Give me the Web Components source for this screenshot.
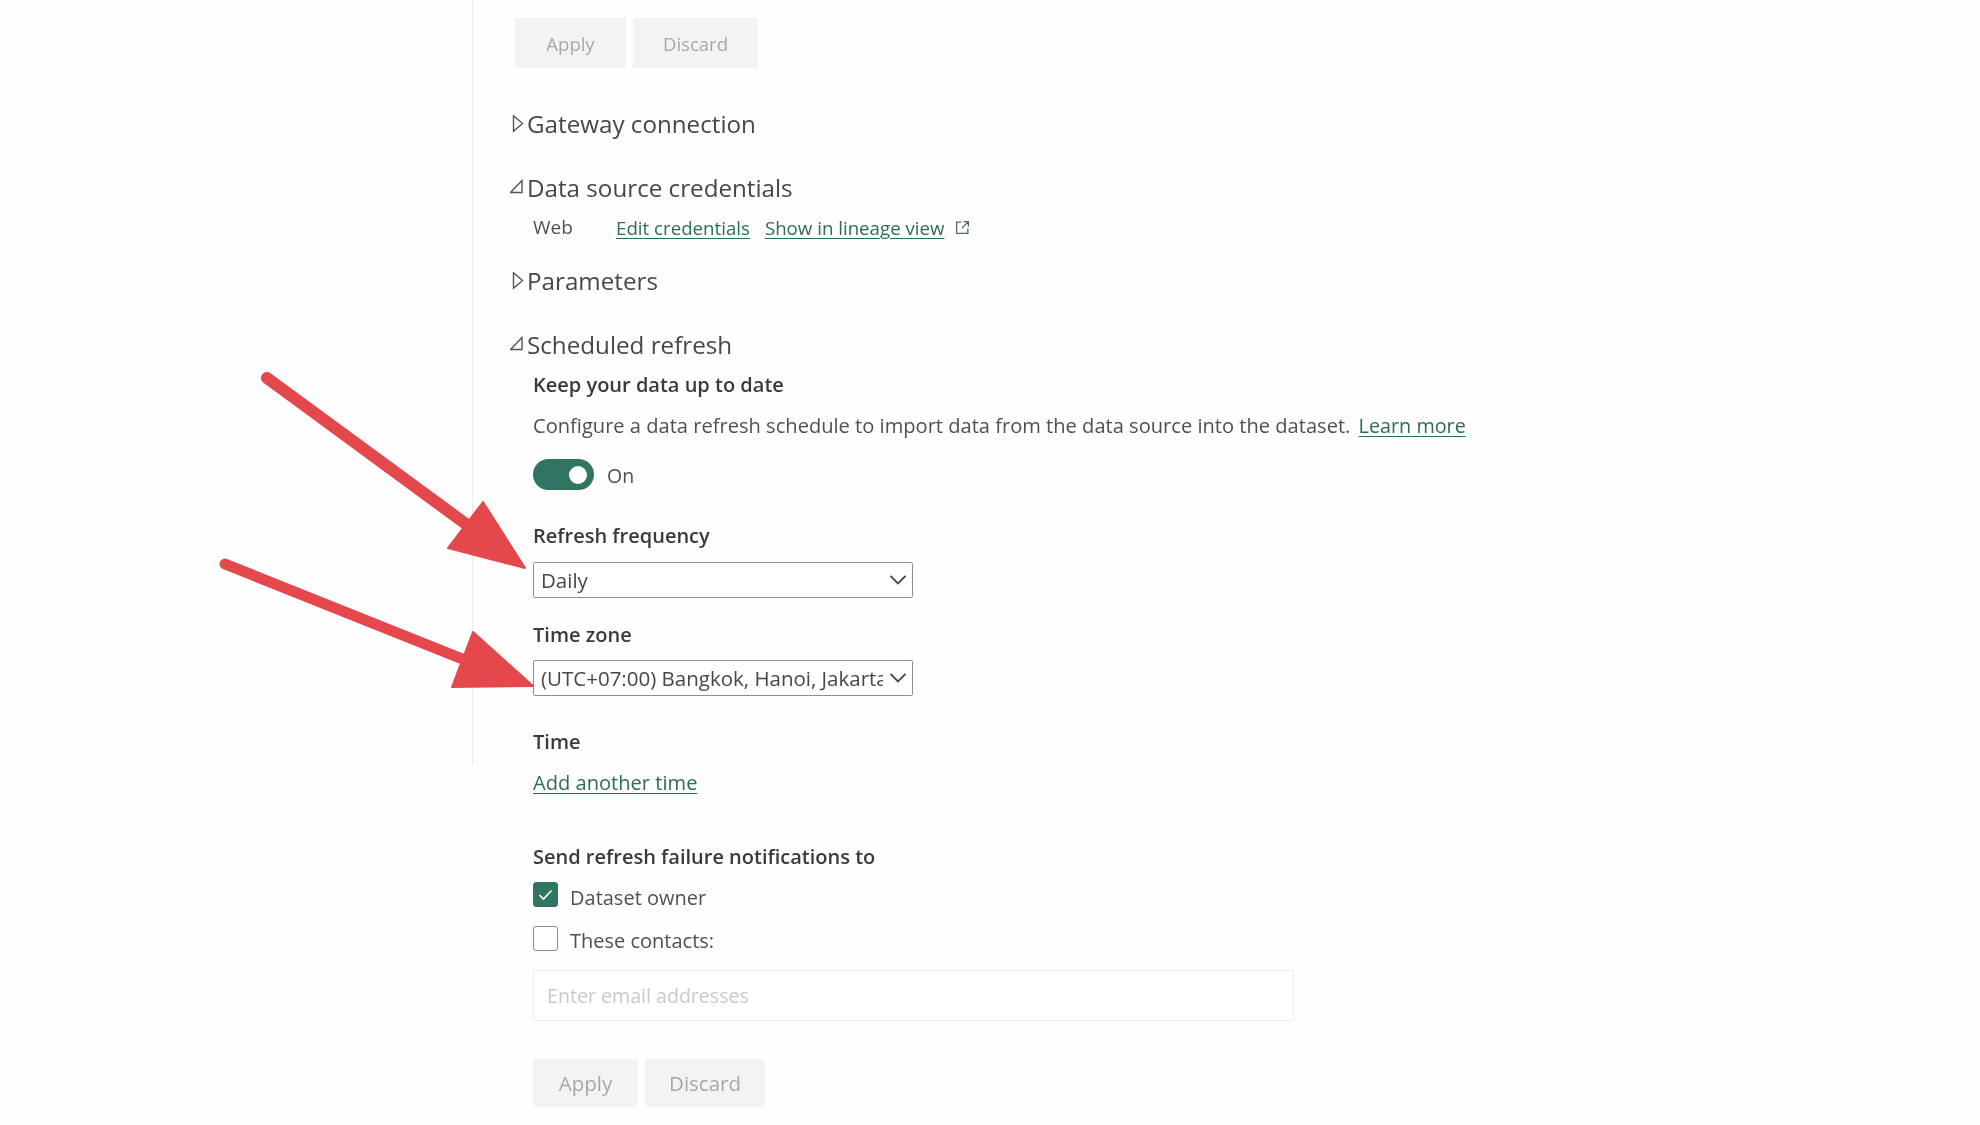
<!DOCTYPE html>
<html lang="en">
<head>
<meta charset="utf-8">
<title>Scheduled refresh</title>
<style>
  html, body { margin: 0; background: #fefefe; }
  body { font-family: "Open Sans", "Noto Sans", sans-serif; color: #505050; }
</style>
</head>
<body>
<settings-page></settings-page>
<script>
class UiButton extends HTMLElement {
  constructor() {
    super();
    this.attachShadow({ mode: 'open' }).innerHTML = `
    <style>
      :host { display: flex; align-items: center; justify-content: center; height: 48px; background: #f3f3f3; color: #a8a8a8; font-size: 20.5px; border-radius: 4px; box-sizing: border-box; }
      :host([wide]) { height: 50px; font-size: 18.5px; border-radius: 1px; }
    </style>
    <slot></slot>`;
  }
}

class SectionHead extends HTMLElement {
  constructor() {
    super();
    const open = this.hasAttribute('open');
    const icon = open
      ? '<path d="M12 1.5V13.5H0.5Z"/>'
      : '<path d="M3.5 0.8L12.5 8.5L3.5 16.2Z"/>';
    this.attachShadow({ mode: 'open' }).innerHTML = `
    <style>
      :host { display: flex; align-items: center; height: 36px; font-size: 24.2px; color: #474747; }
      svg { width: 17px; height: 18px; margin-top: 2px; flex: none; fill: none; stroke: #555; stroke-width: 1.4; }
    </style>
    <svg viewBox="0 0 17 18">${icon}</svg><slot></slot>`;
  }
}

class UiLink extends HTMLElement {
  constructor() {
    super();
    this.attachShadow({ mode: 'open' }).innerHTML = `
    <style>
      :host { display: inline; color: #2f6b5b; text-decoration: underline; text-underline-offset: 3px; text-decoration-thickness: 1px; }
    </style>
    <slot></slot>`;
  }
}

class UiToggle extends HTMLElement {
  constructor() {
    super();
    this.attachShadow({ mode: 'open' }).innerHTML = `
    <style>
      :host { display: flex; align-items: center; gap: 13px; height: 31px; font-size: 19.5px; color: #505050; }
      .track { display: flex; align-items: center; justify-content: flex-end; box-sizing: border-box; width: 61px; height: 31px; padding-right: 7px; border-radius: 16px; background: #2f7562; }
      .knob { width: 18px; height: 18px; border-radius: 50%; background: #fff; }
      .label { padding-top: 2px; }
    </style>
    <div class="track"><div class="knob"></div></div><div class="label"><slot></slot></div>`;
  }
}

class UiSelect extends HTMLElement {
  constructor() {
    super();
    this.attachShadow({ mode: 'open' }).innerHTML = `
    <style>
      :host { display: flex; align-items: center; box-sizing: border-box; width: 380px; height: 36px; padding: 0 4px 0 7px; background: #fff; border: 1px solid #8f8f8f; border-radius: 2px; font-size: 20.5px; color: #474747; }
      .value { flex: 1; min-width: 0; overflow: hidden; white-space: nowrap; }
      svg { width: 20px; height: 12px; margin-left: 5px; flex: none; fill: none; stroke: #444; stroke-width: 1.8; }
    </style>
    <div class="value"><slot></slot></div>
    <svg viewBox="0 0 20 12"><path d="M2.5 1.8L10 9.5L17.5 1.8"/></svg>`;
  }
}

class UiCheck extends HTMLElement {
  constructor() {
    super();
    const mark = this.hasAttribute('checked')
      ? '<svg viewBox="0 0 25 25"><path d="M6.5 13L10.5 17L18.5 8.5"/></svg>'
      : '';
    this.attachShadow({ mode: 'open' }).innerHTML = `
    <style>
      :host { display: flex; gap: 12px; height: 25px; font-size: 20px; color: #505050; }
      .box { box-sizing: border-box; width: 25px; height: 25px; flex: none; border: 1px solid #8c8c8c; border-radius: 3px; background: #fff; }
      :host([checked]) .box { background: #2f7562; border-color: #2f7562; }
      :host([checked]) .label { line-height: 32px; }
      svg { display: block; width: 25px; height: 25px; margin: -1px; fill: none; stroke: #fff; stroke-width: 1.6; }
      .label { line-height: 30px; white-space: nowrap; }
    </style>
    <div class="box">${mark}</div><div class="label"><slot></slot></div>`;
  }
}

class SettingsPage extends HTMLElement {
  constructor() {
    super();
    this.attachShadow({ mode: 'open' }).innerHTML = `
    <style>
      :host { display: flex; position: relative; width: 1980px; height: 1125px; overflow: hidden; background: #fefefe; font-size: 20.1px; filter: blur(0.35px); }
      .rail { width: 472px; height: 765px; flex: none; border-right: 1px solid #eceaea; }
      .main { flex: 1; padding-left: 37px; }
      .actions { display: flex; gap: 7px; }
      .top { margin: 18px 0 0 5px; }
      .top ui-button:first-child { width: 111px; }
      .top ui-button:last-child { width: 125px; }
      .bottom { margin-top: 38px; }
      .bottom ui-button:first-child { width: 105px; }
      .bottom ui-button:last-child { width: 120px; }
      .gateway { margin-top: 37px; }
      .sources { margin-top: 28px; }
      .params { margin-top: 19px; }
      .sched { margin-top: 28px; }
      .body { margin-left: 23px; }
      .row { display: flex; align-items: center; height: 32px; margin-top: 6px; white-space: nowrap; font-size: 18.7px; }
      .web { width: 83px; font-size: 19px; }
      .row ui-link + ui-link { margin-left: 15px; }
      .ext { width: 15px; height: 15px; margin-left: 10px; fill: none; stroke: #4d6a62; stroke-width: 1.2; }
      .label { height: 30px; line-height: 30px; font-weight: 600; color: #3a3a3a; font-size: 20px; white-space: nowrap; }
      .text { height: 30px; line-height: 30px; white-space: nowrap; }
      .keep { margin-top: 8px; }
      .desc { margin-top: 11px; }
      .desc ui-link { margin-left: 3px; font-size: 19.8px; }
      ui-toggle { margin-top: 18px; }
      .freq { margin-top: 31px; }
      .freq + ui-select { margin-top: 11px; }
      .zone { margin-top: 22px; }
      .zone + ui-select { margin-top: 10px; }
      .time { margin-top: 31px; }
      .add { margin-top: 11px; }
      .send { margin-top: 44px; }
      .owner { margin-top: 10px; }
      .contacts { margin-top: 19px; }
      .email { box-sizing: border-box; width: 761px; height: 51px; margin-top: 19px; padding-left: 13px; display: flex; align-items: center; border: 1px solid #ececec; border-radius: 2px; background: #fff; color: #c9c9c9; font-size: 19.6px; }
      .arrows { position: absolute; left: 0; top: 0; width: 1980px; height: 1125px; pointer-events: none; }
      .arrows line { stroke: #e5484c; stroke-linecap: round; }
      .arrows polygon { fill: #e5484c; stroke: #e5484c; stroke-width: 2; stroke-linejoin: round; }
    </style>
    <div class="rail"></div>
    <div class="main">
      <div class="actions top"><ui-button wide>Apply</ui-button><ui-button wide>Discard</ui-button></div>
      <section-head class="gateway">Gateway connection</section-head>
      <section-head class="sources" open>Data source credentials</section-head>
      <div class="body row">
        <span class="web">Web</span>
        <ui-link>Edit credentials</ui-link>
        <ui-link>Show in lineage view</ui-link>
        <svg class="ext" viewBox="0 0 14 14"><path d="M6 2H1.5V12.5H12V8M8 1.5H12.5V6M12.5 1.5L6.5 7.5"/></svg>
      </div>
      <section-head class="params">Parameters</section-head>
      <section-head class="sched" open>Scheduled refresh</section-head>
      <div class="body">
        <div class="label keep">Keep your data up to date</div>
        <div class="text desc">Configure a data refresh schedule to import data from the data source into the dataset. <ui-link>Learn more</ui-link></div>
        <ui-toggle>On</ui-toggle>
        <div class="label freq">Refresh frequency</div>
        <ui-select>Daily</ui-select>
        <div class="label zone">Time zone</div>
        <ui-select>(UTC+07:00) Bangkok, Hanoi, Jakarta</ui-select>
        <div class="label time">Time</div>
        <div class="text add"><ui-link>Add another time</ui-link></div>
        <div class="label send">Send refresh failure notifications to</div>
        <ui-check class="owner" checked>Dataset owner</ui-check>
        <ui-check class="contacts">These contacts:</ui-check>
        <div class="email">Enter email addresses</div>
        <div class="actions bottom"><ui-button>Apply</ui-button><ui-button>Discard</ui-button></div>
      </div>
    </div>
    <svg class="arrows" viewBox="0 0 1980 1125">
      <line x1="267" y1="378" x2="470" y2="527" stroke-width="12"/>
      <polygon points="525,568 483,502 448,548"/>
      <line x1="225" y1="564" x2="465" y2="660" stroke-width="11"/>
      <polygon points="533,686 473,632 452,687"/>
    </svg>`;
  }
}

customElements.define('ui-button', UiButton);
customElements.define('section-head', SectionHead);
customElements.define('ui-link', UiLink);
customElements.define('ui-toggle', UiToggle);
customElements.define('ui-select', UiSelect);
customElements.define('ui-check', UiCheck);
customElements.define('settings-page', SettingsPage);
</script>
</body>
</html>
